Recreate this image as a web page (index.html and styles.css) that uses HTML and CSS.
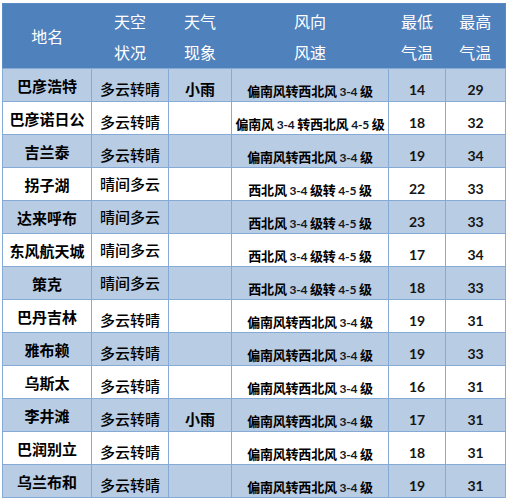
FILE: index.html
```html
<!DOCTYPE html>
<html lang="zh">
<head>
<meta charset="utf-8">
<link rel="stylesheet" href="styles.css">
</head>
<body>
<table class="wx">
  <colgroup>
    <col class="c1"><col class="c2"><col class="c3"><col class="c4"><col class="c5"><col class="c6">
  </colgroup>
  <thead>
    <tr>
      <th>地名</th>
      <th>天空<br>状况</th>
      <th>天气<br>现象</th>
      <th>风向<br>风速</th>
      <th>最低<br>气温</th>
      <th>最高<br>气温</th>
    </tr>
  </thead>
  <tbody>
    <tr class="alt"><td class="name">巴彦浩特</td><td class="sky lo">多云转晴</td><td class="sky lo rain">小雨</td><td class="wind">偏南风转西北风 <span class="n">3-4</span> 级</td><td class="num">14</td><td class="num">29</td></tr>
    <tr><td class="name">巴彦诺日公</td><td class="sky lo">多云转晴</td><td></td><td class="wind">偏南风 <span class="n">3-4</span> 转西北风 <span class="n">4-5</span> 级</td><td class="num">18</td><td class="num">32</td></tr>
    <tr class="alt"><td class="name">吉兰泰</td><td class="sky lo">多云转晴</td><td></td><td class="wind">偏南风转西北风 <span class="n">3-4</span> 级</td><td class="num">19</td><td class="num">34</td></tr>
    <tr><td class="name">拐子湖</td><td class="sky">晴间多云</td><td></td><td class="wind">西北风 <span class="n">3-4</span> 级转 <span class="n">4-5</span> 级</td><td class="num">22</td><td class="num">33</td></tr>
    <tr class="alt"><td class="name">达来呼布</td><td class="sky">晴间多云</td><td></td><td class="wind">西北风 <span class="n">3-4</span> 级转 <span class="n">4-5</span> 级</td><td class="num">23</td><td class="num">33</td></tr>
    <tr><td class="name">东风航天城</td><td class="sky">晴间多云</td><td></td><td class="wind">西北风 <span class="n">3-4</span> 级转 <span class="n">4-5</span> 级</td><td class="num">17</td><td class="num">34</td></tr>
    <tr class="alt"><td class="name">策克</td><td class="sky">晴间多云</td><td></td><td class="wind">西北风 <span class="n">3-4</span> 级转 <span class="n">4-5</span> 级</td><td class="num">18</td><td class="num">33</td></tr>
    <tr><td class="name">巴丹吉林</td><td class="sky lo">多云转晴</td><td></td><td class="wind">偏南风转西北风 <span class="n">3-4</span> 级</td><td class="num">19</td><td class="num">31</td></tr>
    <tr class="alt"><td class="name">雅布赖</td><td class="sky lo">多云转晴</td><td></td><td class="wind">偏南风转西北风 <span class="n">3-4</span> 级</td><td class="num">19</td><td class="num">33</td></tr>
    <tr><td class="name">乌斯太</td><td class="sky lo">多云转晴</td><td></td><td class="wind">偏南风转西北风 <span class="n">3-4</span> 级</td><td class="num">16</td><td class="num">31</td></tr>
    <tr class="alt"><td class="name">李井滩</td><td class="sky lo">多云转晴</td><td class="sky lo rain">小雨</td><td class="wind">偏南风转西北风 <span class="n">3-4</span> 级</td><td class="num">17</td><td class="num">31</td></tr>
    <tr><td class="name">巴润别立</td><td class="sky lo">多云转晴</td><td></td><td class="wind">偏南风转西北风 <span class="n">3-4</span> 级</td><td class="num">18</td><td class="num">31</td></tr>
    <tr class="alt"><td class="name">乌兰布和</td><td class="sky lo">多云转晴</td><td></td><td class="wind">偏南风转西北风 <span class="n">3-4</span> 级</td><td class="num">19</td><td class="num">31</td></tr>
  </tbody>
</table>
</body>
</html>
```
FILE: styles.css
```css
html, body {
  margin: 0;
  padding: 0;
  background: #ffffff;
}
body {
  padding: 3px 0 0 2px;
  font-family: "Noto Sans CJK SC", "Noto Sans", sans-serif;
}
.wx {
  border-collapse: collapse;
  table-layout: fixed;
  width: 503px;
  border: 1px solid #5b8bc6;
}
.c1 { width: 89px; }
.c2 { width: 77px; }
.c3 { width: 63px; }
.c4 { width: 157px; }
.c5 { width: 57px; }
.c6 { width: 60px; }

.wx thead tr {
  height: 65px;
  background: #4f81bd;
}
.wx th {
  color: #ffffff;
  font-weight: 400;
  font-size: 16px;
  line-height: 31px;
  padding: 1px 0 0 0;
  text-align: center;
  vertical-align: middle;
  border: none;
}
.wx tbody tr {
  height: 33px;
  background: #ffffff;
}
.wx tbody tr.alt {
  background: #b8cce4;
}
.wx td {
  border: 1px solid #86aad6;
  text-align: center;
  vertical-align: middle;
  padding: 0;
  color: #000000;
  line-height: 18px;
  white-space: nowrap;
}
.wx td.name {
  font-size: 15px;
  font-weight: 700;
  padding-top: 2px;
}
.wx td.sky {
  font-size: 15px;
  font-weight: 500;
}
.wx td.sky.lo {
  padding-top: 8px;
}
.wx td.rain {
  font-weight: 700;
}
.wx td.wind {
  font-size: 13px;
  font-weight: 700;
  padding-top: 12px;
  letter-spacing: -0.2px;
}
.wx .n {
  font-family: "Lato", "Liberation Sans", sans-serif;
  font-size: 12px;
  font-weight: 700;
  color: #101828;
}
.wx td.num {
  font-family: "Lato", "Liberation Sans", sans-serif;
  font-size: 14px;
  font-weight: 700;
  color: #151515;
  padding-top: 10px;
}
```
